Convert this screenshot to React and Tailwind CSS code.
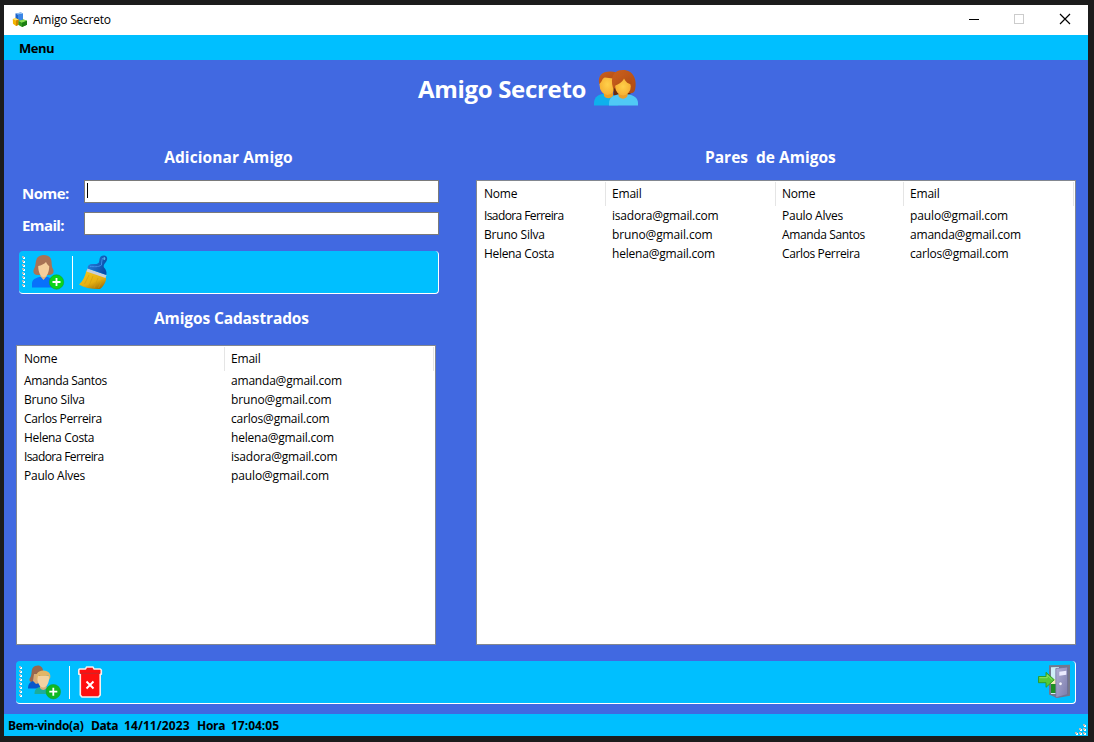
import React from "react";

const friends = [
  ["Amanda Santos", "amanda@gmail.com"],
  ["Bruno Silva", "bruno@gmail.com"],
  ["Carlos Perreira", "carlos@gmail.com"],
  ["Helena Costa", "helena@gmail.com"],
  ["Isadora Ferreira", "isadora@gmail.com"],
  ["Paulo Alves", "paulo@gmail.com"],
];

const pairs = [
  ["Isadora Ferreira", "isadora@gmail.com", "Paulo Alves", "paulo@gmail.com"],
  ["Bruno Silva", "bruno@gmail.com", "Amanda Santos", "amanda@gmail.com"],
  ["Helena Costa", "helena@gmail.com", "Carlos Perreira", "carlos@gmail.com"],
];

const tracking = {
  "Isadora Ferreira": "tracking-[-0.6px]",
  "Amanda Santos": "tracking-[-0.37px]",
  "Carlos Perreira": "tracking-[-0.37px]",
  "Helena Costa": "tracking-[-0.32px]",
  "Bruno Silva": "tracking-[-0.2px]",
  "Paulo Alves": "tracking-[-0.25px]",
  "paulo@gmail.com": "tracking-[-0.13px]",
  "bruno@gmail.com": "tracking-[-0.13px]",
};

function AppIcon() {
  return (
    <svg width="16" height="16" viewBox="0 0 16 16">
      <path d="M3.500 1.500 9 .5l2 1.200v6L6 9 3.500 7.500z" fill="#1d63c9" />
      <path d="M3.500 1.500 9 .5l2 1.200L6 2.800z" fill="#8fc0f5" />
      <path d="M6 2.800 11 1.700v6L6 9z" fill="#3a86e6" />
      <path d="M.8 7l3-.8 2.900 1.300v5.200L4 14 1 11.800z" fill="#f5b400" />
      <path d="M.8 7l3-.8 2.900 1.300L4 8.600z" fill="#ffe36b" />
      <path d="M4 8.600 6.700 7.500v5.200L4 14z" fill="#c98500" />
      <path d="M6.500 9l5-1.500L15 8.800v4L10 15l-3.500-2z" fill="#2f9a1d" />
      <path d="M6.500 9l5-1.500L15 8.800l-5 1.900z" fill="#8ade55" />
      <path d="M10 10.700l5-1.900v4L10 15z" fill="#1c7d13" />
    </svg>
  );
}

function CoupleIcon() {
  return (
    <svg width="46" height="38" viewBox="0 0 46 38">
      <defs>
        <radialGradient id="skin" cx=".5" cy=".5" r=".6">
          <stop offset="0" stopColor="#ffd04a" />
          <stop offset="1" stopColor="#f5ab2e" />
        </radialGradient>
        <linearGradient id="hair" x1="0" y1="0" x2="1" y2="1">
          <stop offset="0" stopColor="#cb601d" />
          <stop offset="1" stopColor="#ad4a13" />
        </linearGradient>
      </defs>
      <path d="M1 36.500v-2.500c0-6 5-9.500 12-9.500s12 3 12 9.500v2.500z" fill="#0fb0ec" />
      <path d="M11 20h9v7c-2 3-7 3-9 0z" fill="#eba028" />
      <ellipse cx="14.500" cy="15.500" rx="8" ry="10.500" fill="url(#skin)" />
      <path d="M6.300 15C4.500 7 9 2.500 17 2.500c4-.2 7 1 8 3l-5 4-8-1c-3 .5-2.500 4-5.700 6.500z" fill="url(#hair)" />
      <path d="M20.500 17h17v8c-4 3-12 3-17 1z" fill="#6a2c0c" />
      <path d="M16 36.500v-2.500c0-6 6-9 14.500-9S45 28 45 34v2.500z" fill="#50c9f5" />
      <path d="M20 19C17 8 20.500 1 30 1c10.500 0 14.500 10 12 20-1 3-3 3.500-6 3L24 20z" fill="url(#hair)" />
      <path d="M25.500 20h9v7c-2 3.500-7 3.500-9 0z" fill="#eba028" />
      <ellipse cx="30" cy="17.500" rx="7.800" ry="9" fill="url(#skin)" />
      <path d="M21.500 16.500c3.500-.5 7.500-3 9.500-7 1.500 3.500 4.500 5.500 7.500 6l.5-7-8-4-7 3z" fill="url(#hair)" />
    </svg>
  );
}

function PlusBadge({ x, y, r, fill }) {
  return (
    <g>
      <circle cx={x} cy={y} r={r} fill={fill} stroke="#10a329" strokeWidth=".6" />
      <path d={`M${x - 4} ${y}h8M${x} ${y - 4}v8`} stroke="#fff" strokeWidth="1.800" />
    </g>
  );
}

function AddPersonIcon() {
  return (
    <svg width="36" height="36" viewBox="0 0 36 36">
      <path d="M8 4c3-4 11-4 13.500 0 2 4 .5 8 2.500 11 1.500 3 0 5.500-3 6H8c-3-.5-4.500-3-3-6C7 12 6 8 8 4z" fill="#a97355" />
      <path d="M3 33.500V29c.5-4 4-5 9-6.500h5c5 1.500 8 3 9 6.500v4.500z" fill="#0871fb" />
      <path d="M11.500 18h6v4.500l-3 3.500-3-3.500z" fill="#e3b57f" />
      <path d="M9.200 12c3-.5 6-2 7.800-4 1 2 2 3.500 3.200 4 0 6-2 11-5.400 11s-5.600-5-5.600-11z" fill="#f6cf9c" />
      <PlusBadge x={27.500} y={28} r={7.200} fill="#0bd51b" />
    </svg>
  );
}

function AddPeopleIcon() {
  return (
    <svg width="36" height="36" viewBox="0 0 36 36">
      <path d="M6 3.500C8 1 13 .5 15 3.500c2 3 1 7 2 10l-3 4.500H4c-2-1-2-3-.5-5S4 6 6 3.500z" fill="#97684e" />
      <path d="M1 24.500c0-5 2.500-7 6.500-8H13v8z" fill="#0756cb" />
      <path d="M7 10h5v9l-3 1-3-3z" fill="#d6ab79" />
      <path d="M7.500 30c0-5 2.500-6.500 6.500-7.500h5c3 .5 5 2 6 7.500z" fill="#1cad9a" />
      <path d="M13 20h6.500v4c-2 2.500-4.500 2.500-6.500 0z" fill="#d8af7c" />
      <path d="M10.200 12h12c.3 6-2.200 11.500-6 11.500S10 18 10.200 12z" fill="#f3d2a1" />
      <path d="M10 16C8 10 11 6.500 16.300 6.500S25 10 22.600 16l-1.200-4.500c-3 .8-6.800.8-10.200 0z" fill="#e2b667" />
      <PlusBadge x={26.300} y={27.700} r={7.200} fill="#10b924" />
    </svg>
  );
}

function BrushIcon() {
  return (
    <svg width="32" height="36" viewBox="0 0 32 36">
      <defs>
        <linearGradient id="bristle" x1=".2" y1="0" x2=".8" y2="1">
          <stop offset="0" stopColor="#f5c51c" />
          <stop offset=".6" stopColor="#e5b012" />
          <stop offset="1" stopColor="#9b6b08" />
        </linearGradient>
        <linearGradient id="handle" x1="0" y1="0" x2="1" y2=".4">
          <stop offset="0" stopColor="#2c86e4" />
          <stop offset="1" stopColor="#0a4da8" />
        </linearGradient>
      </defs>
      <path d="M8.500 15.500 28 22.500c.5 4-2.500 9-6 11.500-7 .5-15.500-1-21-4.500 4-3.500 6-8 7.500-14z" fill="url(#bristle)" />
      <path d="M11 20 6.500 29M15 21l-4 10M20 23l-4 10M24 25l-3.500 8" stroke="#cf9c10" strokeWidth=".6" fill="none" />
      <path d="M9.500 13.500 28.500 20l-1 3L8.500 16.500z" fill="#c8ced8" />
      <path d="M9.800 13.500c-.5-3.500 2-5 6-4.500 6 .5 5.200-2.500 5.700-5C22 1 24.500 0 26.500.5c2.500.5 3.500 3 2 5.500-1.500 2.500-3.500 4-2.500 6.500 2 2 3 4.500 2.300 7.500z" fill="url(#handle)" />
      <path d="M12 11.500c4 0 8 1 11.500-1.500 0-3 .5-5 1-7" stroke="#3f8fe8" strokeWidth="1" fill="none" />
      <ellipse cx="26.300" cy="3.400" rx="1" ry="1.500" fill="#4fb4ee" />
    </svg>
  );
}

function TrashIcon() {
  return (
    <svg width="26" height="34" viewBox="0 0 26 34">
      <path d="M8.500 3 9.500 1h6.500l1 2h6.200L24.300 4v4.300h-1.100V29l-1.700 2H5l-1.700-2V8.300H1.800V4l.7-1z" fill="#fe1010" stroke="#f6efef" strokeWidth="1.600" strokeLinejoin="round" />
      <path d="M3 7.300h20" stroke="#c9282b" strokeWidth="1" />
      <path d="M10 3.500h5.500" stroke="#c9282b" strokeWidth="1" />
      <path d="m9.500 15.500 7 7m0-7-7 7" stroke="#fff" strokeWidth="1.900" />
    </svg>
  );
}

function ExitIcon() {
  return (
    <svg width="34" height="36" viewBox="0 0 34 36">
      <defs>
        <linearGradient id="door" x1="0" y1="0" x2="1" y2="1">
          <stop offset="0" stopColor="#b0b0d6" />
          <stop offset="1" stopColor="#7c7cac" />
        </linearGradient>
      </defs>
      <path d="M12 1.200 33 .8v31L20 34l-8-3.500z" fill="#73788c" />
      <path d="M14 3.200 22 3v27h-8z" fill="#cfeef8" />
      <path d="M14 20h5v9h-5z" fill="#1c8f23" />
      <path d="M14 15h5v5h-5z" fill="#f1f0b8" />
      <path d="M18.800 4.500 30.500 3v27.500L18.800 33.700z" fill="url(#door)" stroke="#6d6d98" strokeWidth=".7" />
      <path d="m22.300 7.800 7-1v4l-7 1z" fill="#ececff" />
      <circle cx="23.500" cy="19.800" r="1.700" fill="#f4f4ff" stroke="#77779f" strokeWidth=".4" />
      <path d="M1.500 12.500H9V8.300l8.300 7.500L9 23.300v-4.600H1.500z" fill="#55c936" stroke="#2c9a20" strokeWidth=".9" strokeLinejoin="round" />
      <path d="M2.500 13.700h7.700V11l5 4.700" stroke="#8fe068" fill="none" />
    </svg>
  );
}

function Grip() {
  return (
    <svg width="4" height="32" viewBox="0 0 4 32">
      {[0, 4, 8, 12, 16, 20, 24, 28].map((y) => (
        <g key={y}>
          <rect x="1" y={y + 1} width="2" height="2" fill="#fff" />
          <rect x="0" y={y} width="2" height="2" fill="#a9b9bd" />
        </g>
      ))}
    </svg>
  );
}

function ToolStrip({ children, className }) {
  return (
    <div className={"flex h-[43px] rounded-[4px] border-b border-r border-white bg-[#00bfff] " + className}>
      {children}
    </div>
  );
}

function ListView({ columns, rows, widths, className }) {
  return (
    <div className={"border border-[#828790] bg-white text-[12px] tracking-[-0.2px] text-black " + className}>
      <div className="flex h-[25px]">
        {columns.map((c, i) => (
          <div key={i} className={"flex shrink-0 " + widths[i]}>
            <span className="grow pl-[7px] pt-px leading-[24px]">{c}</span>
            <span className={"mt-px w-px bg-[#e5e5e5] " + (i < columns.length - 1 ? "-mr-px" : "")} />
          </div>
        ))}
      </div>
      {rows.map((r, i) => (
        <div key={i} className="flex h-[19px] leading-[19px]">
          {r.map((v, j) => (
            <div key={j} className={"shrink-0 whitespace-nowrap pl-[7px] " + widths[j] + " " + (tracking[v] || "")}>{v}</div>
          ))}
        </div>
      ))}
    </div>
  );
}

function Field({ label, focused, spacing }) {
  return (
    <div className="flex h-[23px]">
      <label className={"w-[65px] pl-[3px] pt-[2px] text-[15px] font-bold leading-[23px] " + spacing}>{label}</label>
      <div className="h-[23px] w-[355px] border border-[#7a7a7a] bg-white pl-[2px] pt-[2px]">
        {focused && <div className="h-[15px] w-px bg-black" />}
      </div>
    </div>
  );
}

export default function App() {
  return (
    <div className="h-[742px] w-[1094px] overflow-hidden bg-[#1c1c1c] pl-[4px] pt-[5px] font-['Open_Sans','Noto_Sans',sans-serif]">
      <div className="flex h-[731px] w-[1084px] flex-col bg-[#4169e1] text-white">
        <header className="flex h-[30px] items-center bg-white pl-[8px] text-black">
          <AppIcon />
          <span className="ml-[5px] text-[12px] leading-[30px] tracking-[-0.23px]">Amigo Secreto</span>
          <svg className="ml-auto" width="125" height="30" viewBox="0 0 125 30" fill="none" shapeRendering="crispEdges">
            <path d="M6 14.500h10" stroke="#000" />
            <path d="M51.500 9.500h9v9h-9z" stroke="#ccc" />
            <path d="m97 9 10 10m0-10L97 19" stroke="#000" strokeWidth="1.200" shapeRendering="auto" />
          </svg>
        </header>
        <nav className="h-[25px] bg-[#00bfff] pl-[15px] text-[13px] font-bold leading-[26px] tracking-[-0.5px] text-black">Menu</nav>
        <main className="flex h-[654px] flex-col">
          <div className="flex h-[120px] pl-[414px] pt-[9px]">
            <h1 className="w-[175px] whitespace-nowrap text-[24px] font-bold leading-[40px] tracking-[-0.32px]">Amigo Secreto</h1>
            <CoupleIcon />
          </div>
          <div className="flex h-[465px] pl-[12px]">
            <section className="w-[460px]">
              <h2 className="ml-[3px] -mt-[34px] mb-[11px] h-[23px] w-[419px] text-center text-[15.5px] font-bold leading-[23px] tracking-[0.1px]">Adicionar Amigo</h2>
              <div className="ml-[3px] flex flex-col gap-[9px]">
                <Field label="Nome:" spacing="tracking-[-0.5px]" focused />
                <Field label="Email:" spacing="tracking-[-0.6px]" />
              </div>
              <ToolStrip className="ml-[3px] mt-[16px] w-[420px] pl-[3px]">
                <div className="pt-[5px]"><Grip /></div>
                <div className="ml-[3px] pt-[3px]"><AddPersonIcon /></div>
                <div className="ml-[7px] mt-[5px] h-[33px] w-px bg-white" />
                <div className="ml-[5px] pt-[4px]"><BrushIcon /></div>
              </ToolStrip>
              <h2 className="mt-[13px] h-[23px] pl-[138px] text-[15.5px] font-bold leading-[23px] tracking-[-0.12px]">Amigos Cadastrados</h2>
              <ListView className="mt-[15px] h-[300px] w-[420px]" columns={["Nome", "Email"]} rows={friends} widths={["w-[207px]", "w-[210px]"]} />
            </section>
            <section className="w-[600px]">
              <h2 className="-mt-[34px] mb-[11px] h-[23px] whitespace-pre pl-[229px] text-[15.5px] font-bold leading-[23px]">{"Pares  de Amigos"}</h2>
              <ListView className="h-[465px] w-[600px]" columns={["Nome", "Email", "Nome", "Email"]} rows={pairs} widths={["w-[128px]", "w-[170px]", "w-[128px]", "w-[171px]"]} />
            </section>
          </div>
          <ToolStrip className="ml-[12px] mt-[16px] w-[1060px] pl-[3px]">
            <div className="pt-[5px]"><Grip /></div>
            <div className="ml-[4px] pt-[3px]"><AddPeopleIcon /></div>
            <div className="ml-[6px] mt-[5px] h-[33px] w-px bg-white" />
            <div className="ml-[7px] pt-[5px]"><TrashIcon /></div>
            <div className="ml-auto pr-[4px] pt-[3px]"><ExitIcon /></div>
          </ToolStrip>
        </main>
        <footer className="flex h-[22px] bg-[#00bfff] pl-[4px] text-[12px] font-bold leading-[23px] text-black">
          <span className="w-[83px] tracking-[-0.35px]">Bem-vindo(a)</span>
          <span className="w-[33px] tracking-[-0.4px]">Data</span>
          <span className="w-[73px] tracking-[0.08px]">14/11/2023</span>
          <span className="w-[34px] tracking-[-0.3px]">Hora</span>
          <span>17:04:05</span>
          <svg className="ml-auto mt-[10px] mr-[1px]" width="12" height="12">
            {[[8, 0], [4, 4], [8, 4], [0, 8], [4, 8], [8, 8]].map(([x, y]) => (
              <g key={x + "-" + y}>
                <rect x={x + 1} y={y + 1} width="2" height="2" fill="#fff" />
                <rect x={x} y={y} width="2" height="2" fill="#c0b8b0" />
              </g>
            ))}
          </svg>
        </footer>
      </div>
    </div>
  );
}
